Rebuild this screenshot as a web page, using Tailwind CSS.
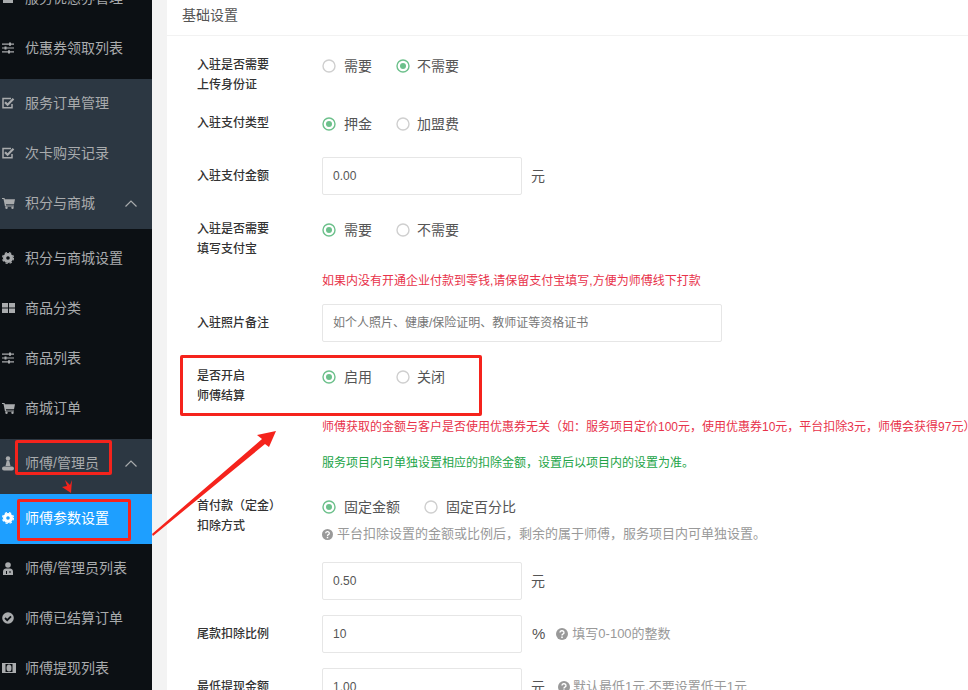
<!DOCTYPE html>
<html lang="zh"><head><meta charset="utf-8">
<script src="https://cdn.jsdelivr.net/npm/@tailwindcss/browser@4"></script>
</head>
<body class="m-0 bg-[#f3f3f3]">
<div class="relative flex h-[690px] w-[968px] overflow-hidden font-['Liberation_Sans','Noto_Sans_CJK_SC',sans-serif] bg-[#f3f3f3]">
  <!-- sidebar -->
  <aside class="w-[152px] shrink-0 h-full overflow-hidden bg-[#0c1014] text-[14px] text-[#a9abad]">
    <div class="-mt-[27px] pb-[6px]">
      <div class="flex h-[50px] items-center gap-[11px] pl-[2px]"><svg class="w-[12px] h-[14px]" viewBox="0 0 12 14"><rect x="1" y="3" width="10" height="9" fill="currentColor"/></svg><span>服务优惠券管理</span></div>
      <div class="flex h-[50px] items-center gap-[11px] pl-[2px]"><svg class="w-[12px] h-[12px]" viewBox="0 0 12 12" fill="currentColor"><path d="M0 1.500h12v1.200H0zM0 5.400h12v1.200H0zM0 9.300h12v1.200H0z"/><path d="M7 .5h2v3.200H7zM2.500 4.400h2v3.200h-2zM6 8.300h2v3.200H6z"/></svg><span>优惠券领取列表</span></div>
    </div>
    <div class="bg-[#2c3742]">
      <div class="flex h-[50px] items-center gap-[10px] pb-[2px] pl-[2px]"><svg class="w-[13px] h-[12px]" viewBox="0 0 13 12" fill="none" stroke="currentColor" stroke-width="1.500"><path d="M10 7v3.800H1V1.500h8"/><path d="M3 5.200l2.600 2.600L11.500 1.800" stroke-width="2.200"/></svg><span>服务订单管理</span></div>
      <div class="flex h-[50px] items-center gap-[10px] pb-[2px] pl-[2px]"><svg class="w-[13px] h-[12px]" viewBox="0 0 13 12" fill="none" stroke="currentColor" stroke-width="1.500"><path d="M10 7v3.800H1V1.500h8"/><path d="M3 5.200l2.600 2.600L11.500 1.800" stroke-width="2.200"/></svg><span>次卡购买记录</span></div>
      <div class="flex h-[50px] items-center pb-[2px] pl-[2px] pr-[15px]"><svg class="w-[13px] h-[12px]" viewBox="0 0 13 12" fill="currentColor"><path d="M0 1h2.500l.4 1.200H13l-1 5H3.900l.3 1.200H12v1H3L1.500 2H0z"/><circle cx="4.500" cy="10.800" r="1.200"/><circle cx="10.500" cy="10.800" r="1.200"/></svg><span class="ml-[10px]">积分与商城</span><svg class="ml-auto w-[12px] h-[7px]" viewBox="0 0 12 7" fill="none" stroke="currentColor" stroke-width="1.200"><path d="M.5 6.500L6 1l5.500 5.500"/></svg></div>
    </div>
    <div class="pt-[4px] pb-[6px]">
      <div class="flex h-[50px] items-center gap-[11px] pl-[2px]"><svg class="w-[12px] h-[12px]" viewBox="0 0 12 12"><circle cx="6" cy="6" r="3.400" fill="none" stroke="currentColor" stroke-width="3.200"/><circle cx="6" cy="6" r="5.400" fill="none" stroke="currentColor" stroke-width="1.300" stroke-dasharray="2.300 2"/></svg><span>积分与商城设置</span></div>
      <div class="flex h-[50px] items-center gap-[10px] pl-[2px]"><svg class="w-[13px] h-[12px]" viewBox="0 0 13 12" fill="currentColor"><rect x="0" y="1" width="6" height="4.500"/><rect x="7" y="1" width="6" height="4.500"/><rect x="0" y="6.500" width="6" height="4.500"/><rect x="7" y="6.500" width="6" height="4.500"/></svg><span>商品分类</span></div>
      <div class="flex h-[50px] items-center gap-[11px] pl-[2px]"><svg class="w-[12px] h-[12px]" viewBox="0 0 12 12" fill="currentColor"><path d="M0 1.500h12v1.200H0zM0 5.400h12v1.200H0zM0 9.300h12v1.200H0z"/><path d="M7 .5h2v3.200H7zM2.500 4.400h2v3.200h-2zM6 8.300h2v3.200H6z"/></svg><span>商品列表</span></div>
      <div class="flex h-[50px] items-center gap-[10px] pl-[2px]"><svg class="w-[13px] h-[12px]" viewBox="0 0 13 12" fill="currentColor"><path d="M0 1h2.500l.4 1.200H13l-1 5H3.900l.3 1.200H12v1H3L1.500 2H0z"/><circle cx="4.500" cy="10.800" r="1.200"/><circle cx="10.500" cy="10.800" r="1.200"/></svg><span>商城订单</span></div>
    </div>
    <div class="bg-[#2c3742] pb-[5px]">
      <div class="flex h-[50px] items-center pb-[2px] pl-[2px] pr-[15px]"><svg class="w-[12px] h-[15px]" viewBox="0 0 12 15" fill="currentColor"><circle cx="6" cy="2.400" r="2.200"/><path d="M4.800 4.500h2.400L8.500 10h-5z"/><path d="M2 10.500h8a2 2 0 0 1 0 4H2a2 2 0 0 1 0-4z"/></svg><span class="ml-[11px]">师傅/管理员</span><svg class="ml-auto w-[12px] h-[7px]" viewBox="0 0 12 7" fill="none" stroke="currentColor" stroke-width="1.200"><path d="M.5 6.500L6 1l5.500 5.500"/></svg></div>
    </div>
    <div class="flex h-[50px] items-center gap-[11px] pb-[2px] pl-[2px] bg-[#1e9fff] text-white"><svg class="w-[12px] h-[12px]" viewBox="0 0 12 12"><circle cx="6" cy="6" r="3.400" fill="none" stroke="currentColor" stroke-width="3.200"/><circle cx="6" cy="6" r="5.400" fill="none" stroke="currentColor" stroke-width="1.300" stroke-dasharray="2.300 2"/></svg><span>师傅参数设置</span></div>
    <div class="flex h-[50px] items-center gap-[11px] pb-[2px] pl-[2px]"><svg class="w-[12px] h-[13px]" viewBox="0 0 12 13" fill="currentColor"><circle cx="6" cy="3" r="2.800"/><path d="M1 13V9.500C1 7.500 2.500 6.500 4 6.500h4c1.500 0 3 1 3 3V13z"/><path d="M4 9h1v3H4zM7.500 9h1v2h-1z" fill="#0c1014"/></svg><span>师傅/管理员列表</span></div>
    <div class="flex h-[50px] items-center gap-[11px] pb-[2px] pl-[2px]"><svg class="w-[12px] h-[12px]" viewBox="0 0 12 12"><circle cx="6" cy="6" r="5.800" fill="currentColor"/><path d="M3 6l2.200 2.200L9 4.300" fill="none" stroke="#0c1014" stroke-width="1.800"/></svg><span>师傅已结算订单</span></div>
    <div class="flex h-[50px] items-center gap-[9px] pb-[2px] pl-[2px]"><svg class="w-[14px] h-[10px]" viewBox="0 0 14 10"><rect x=".5" y=".5" width="13" height="9" fill="none" stroke="currentColor"/><rect x="0" y="0" width="3.500" height="10" fill="currentColor"/><rect x="10.500" y="0" width="3.500" height="10" fill="currentColor"/><ellipse cx="7" cy="5" rx="2.500" ry="3.500" fill="currentColor"/></svg><span>师傅提现列表</span></div>
  </aside>

  <!-- main -->
  <main class="ml-[15px] flex-1 min-w-0 bg-white text-[#555]">
    <div class="h-[36px] border-b border-[#f2f2f2] pl-[15px] pt-[5px] text-[14px] leading-[20px] text-[#555]">基础设置</div>
    <div class="pl-[30px] pt-[18px] text-[14px]">
      <div class="flex">
        <div class="w-[125px] pt-[1px] text-[12px] leading-[20px] font-medium text-[#333]">入驻是否需要<br>上传身份证</div>
        <div class="flex h-[24px] items-center"><svg class="h-[14px] w-[14px]" viewBox="0 0 14 14"><circle cx="7" cy="7" r="6" fill="none" stroke="#cfcfcf" stroke-width="1.400"/></svg><span class="ml-[8px] mr-[24px]">需要</span><svg class="h-[14px] w-[14px]" viewBox="0 0 14 14"><circle cx="7" cy="7" r="6" fill="none" stroke="#6cc08b" stroke-width="1.400"/><circle cx="7" cy="7" r="3" fill="#6cc08b"/></svg><span class="ml-[7px]">不需要</span></div>
      </div>
      <div class="mt-[17px] flex">
        <div class="w-[125px] pt-[1px] text-[12px] leading-[20px] font-medium text-[#333]">入驻支付类型</div>
        <div class="flex h-[24px] items-center"><svg class="h-[14px] w-[14px]" viewBox="0 0 14 14"><circle cx="7" cy="7" r="6" fill="none" stroke="#6cc08b" stroke-width="1.400"/><circle cx="7" cy="7" r="3" fill="#6cc08b"/></svg><span class="ml-[8px] mr-[24px]">押金</span><svg class="h-[14px] w-[14px]" viewBox="0 0 14 14"><circle cx="7" cy="7" r="6" fill="none" stroke="#cfcfcf" stroke-width="1.400"/></svg><span class="ml-[7px]">加盟费</span></div>
      </div>
      <div class="mt-[21px] flex items-center">
        <div class="w-[125px] text-[12px] leading-[20px] font-medium text-[#333]">入驻支付金额</div>
        <div class="flex h-[38px] w-[200px] items-center rounded-[2px] border border-[#e6e6e6] pl-[10px] text-[12px]">0.00</div>
        <span class="ml-[9px]">元</span>
      </div>
      <div class="mt-[23px] flex">
        <div class="w-[125px] pt-[1px] text-[12px] leading-[20px] font-medium text-[#333]">入驻是否需要<br>填写支付宝</div>
        <div class="flex h-[24px] items-center"><svg class="h-[14px] w-[14px]" viewBox="0 0 14 14"><circle cx="7" cy="7" r="6" fill="none" stroke="#6cc08b" stroke-width="1.400"/><circle cx="7" cy="7" r="3" fill="#6cc08b"/></svg><span class="ml-[8px] mr-[24px]">需要</span><svg class="h-[14px] w-[14px]" viewBox="0 0 14 14"><circle cx="7" cy="7" r="6" fill="none" stroke="#cfcfcf" stroke-width="1.400"/></svg><span class="ml-[7px]">不需要</span></div>
      </div>
      <div class="mt-[12px] ml-[125px] text-[12px] leading-[20px] text-[#e8324a] whitespace-nowrap">如果内没有开通企业付款到零钱,请保留支付宝填写,方便为师傅线下打款</div>
      <div class="mt-[13px] flex items-center">
        <div class="w-[125px] text-[12px] leading-[20px] font-medium text-[#333]">入驻照片备注</div>
        <div class="flex h-[38px] w-[400px] items-center rounded-[2px] border border-[#e6e6e6] pl-[10px] text-[12px] text-[#777]">如个人照片、健康/保险证明、教师证等资格证书</div>
      </div>
      <div class="mt-[23px] flex">
        <div class="w-[125px] pt-[1px] text-[12px] leading-[20px] font-medium text-[#333]">是否开启<br>师傅结算</div>
        <div class="flex h-[24px] items-center"><svg class="h-[14px] w-[14px]" viewBox="0 0 14 14"><circle cx="7" cy="7" r="6" fill="none" stroke="#6cc08b" stroke-width="1.400"/><circle cx="7" cy="7" r="3" fill="#6cc08b"/></svg><span class="ml-[8px] mr-[24px]">启用</span><svg class="h-[14px] w-[14px]" viewBox="0 0 14 14"><circle cx="7" cy="7" r="6" fill="none" stroke="#cfcfcf" stroke-width="1.400"/></svg><span class="ml-[7px]">关闭</span></div>
      </div>
      <div class="mt-[11px] ml-[125px] text-[12px] leading-[20px] text-[#e8324a] whitespace-nowrap [text-spacing-trim:space-all]">师傅获取的金额与客户是否使用优惠券无关（如：服务项目定价100元，使用优惠券10元，平台扣除3元，师傅会获得97元）</div>
      <div class="mt-[16px] ml-[125px] text-[12px] leading-[20px] text-[#22a447] whitespace-nowrap">服务项目内可单独设置相应的扣除金额，设置后以项目内的设置为准。</div>
      <div class="mt-[22px] flex">
        <div class="w-[125px] pt-[1px] text-[12px] leading-[20px] font-medium text-[#333]">首付款（定金）<br>扣除方式</div>
        <div>
          <div class="flex h-[24px] items-center"><svg class="h-[14px] w-[14px]" viewBox="0 0 14 14"><circle cx="7" cy="7" r="6" fill="none" stroke="#6cc08b" stroke-width="1.400"/><circle cx="7" cy="7" r="3" fill="#6cc08b"/></svg><span class="ml-[8px] mr-[24px]">固定金额</span><svg class="h-[14px] w-[14px]" viewBox="0 0 14 14"><circle cx="7" cy="7" r="6" fill="none" stroke="#cfcfcf" stroke-width="1.400"/></svg><span class="ml-[8px]">固定百分比</span></div>
          <div class="mt-[5px] flex h-[20px] items-center text-[13px] leading-[20px] text-[#999] whitespace-nowrap"><svg class="mr-[4px] h-[11px] w-[11px]" viewBox="0 0 12 12"><circle cx="6" cy="6" r="6" fill="#999"/><path d="M4 4.600a2 1.800 0 1 1 2.900 1.600c-.6.300-.9.600-.9 1.300" fill="none" stroke="#fff" stroke-width="1.400"/><rect x="5.200" y="8.500" width="1.600" height="1.600" fill="#fff"/></svg>平台扣除设置的金额或比例后，剩余的属于师傅，服务项目内可单独设置。</div>
        </div>
      </div>
      <div class="mt-[18px] ml-[125px] flex items-center">
        <div class="flex h-[38px] w-[200px] items-center rounded-[2px] border border-[#e6e6e6] pl-[10px] text-[12px]">0.50</div>
        <span class="ml-[9px]">元</span>
      </div>
      <div class="mt-[15px] flex items-center">
        <div class="w-[125px] text-[12px] leading-[20px] font-medium text-[#333]">尾款扣除比例</div>
        <div class="flex h-[38px] w-[200px] items-center rounded-[2px] border border-[#e6e6e6] pl-[10px] text-[12px]">10</div>
        <span class="ml-[10px] text-[15px]">%</span>
        <span class="ml-[11px] flex items-center text-[13px] text-[#999]"><svg class="mr-[4px] h-[12px] w-[12px]" viewBox="0 0 12 12"><circle cx="6" cy="6" r="6" fill="#999"/><path d="M4 4.600a2 1.800 0 1 1 2.900 1.600c-.6.300-.9.600-.9 1.300" fill="none" stroke="#fff" stroke-width="1.400"/><rect x="5.200" y="8.500" width="1.600" height="1.600" fill="#fff"/></svg>填写0-100的整数</span>
      </div>
      <div class="mt-[15px] flex items-center">
        <div class="w-[125px] text-[12px] leading-[20px] font-medium text-[#333]">最低提现金额</div>
        <div class="flex h-[38px] w-[200px] items-center rounded-[2px] border border-[#e6e6e6] pl-[10px] text-[12px]">1.00</div>
        <span class="ml-[9px]">元</span>
        <span class="ml-[13px] flex items-center text-[13px] text-[#999]"><svg class="mr-[3px] h-[12px] w-[12px]" viewBox="0 0 12 12"><circle cx="6" cy="6" r="6" fill="#999"/><path d="M4 4.600a2 1.800 0 1 1 2.900 1.600c-.6.300-.9.600-.9 1.300" fill="none" stroke="#fff" stroke-width="1.400"/><rect x="5.200" y="8.500" width="1.600" height="1.600" fill="#fff"/></svg>默认最低1元,不要设置低于1元</span>
      </div>
    </div>
  </main>

  <!-- red annotations over the screenshot -->
  <div class="absolute left-[180px] top-[355px] h-[61px] w-[302px] rounded-[2px] border-[3px] border-[#f5231c]"></div>
  <div class="absolute left-[15px] top-[440px] h-[35px] w-[97px] rounded-[2px] border-[3px] border-[#f5231c]"></div>
  <div class="absolute left-[17px] top-[499px] h-[42px] w-[114px] rounded-[2px] border-[3px] border-[#f5231c]"></div>
  <svg class="absolute left-0 top-0 h-[690px] w-[968px] pointer-events-none" viewBox="0 0 968 690" fill="#f5231c">
    <path d="M152 534L262 439L257 435L276 431L269 447L265 444L153 536z"/>
    <path d="M65 480L70 485L72 480L71 493L62 487L67 486z"/>
  </svg>
</div>
</body></html>
